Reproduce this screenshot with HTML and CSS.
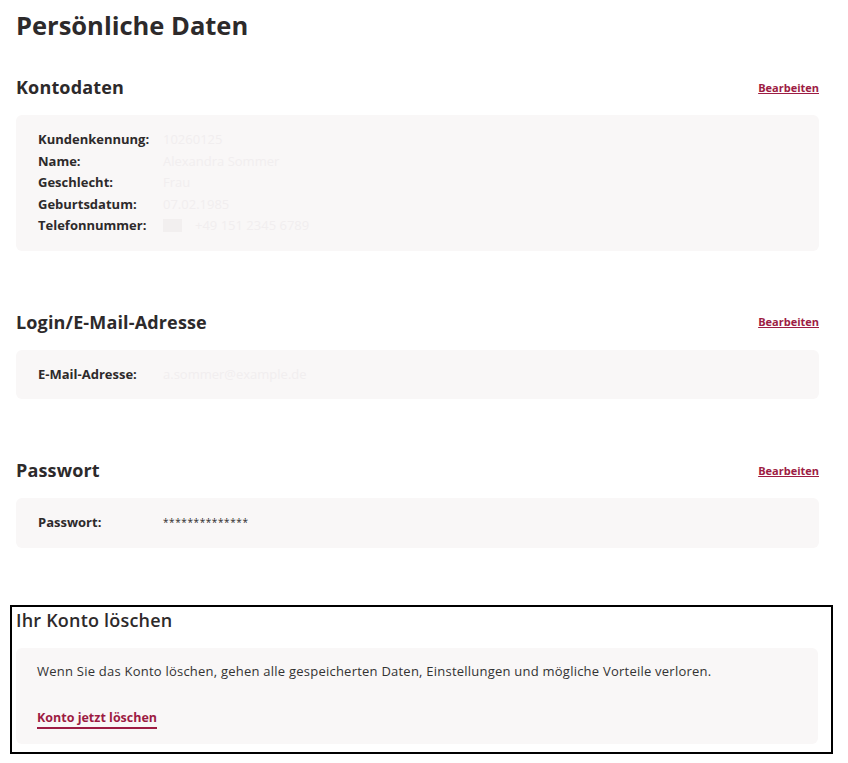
FILE: index.html
```html
<!DOCTYPE html>
<html lang="de">

<head>
    <meta charset="UTF-8">
    <meta name="viewport" content="width=device-width, initial-scale=1.0">
    <title>Persönliche Daten</title>

    <link rel="stylesheet" href="styles.css">
</head>

<body>

    <main class="page">
        <h1 class="page-title">Persönliche Daten</h1>

        <section class="section">
            <div class="section-head">
                <h2 class="section-title">Kontodaten</h2>
                <a href="#" class="edit-link">Bearbeiten</a>
            </div>
            <div class="card">
                <div class="data-row">
                    <span class="data-label">Kundenkennung:</span>
                    <span class="data-value">10260125</span>
                </div>
                <div class="data-row">
                    <span class="data-label">Name:</span>
                    <span class="data-value">Alexandra Sommer</span>
                </div>
                <div class="data-row">
                    <span class="data-label">Geschlecht:</span>
                    <span class="data-value">Frau</span>
                </div>
                <div class="data-row">
                    <span class="data-label">Geburtsdatum:</span>
                    <span class="data-value">07.02.1985</span>
                </div>
                <div class="data-row">
                    <span class="data-label">Telefonnummer:</span>
                    <span class="data-value"><span class="flag"></span>+49 151 2345 6789</span>
                </div>
            </div>
        </section>

        <section class="section">
            <div class="section-head">
                <h2 class="section-title">Login/E-Mail-Adresse</h2>
                <a href="#" class="edit-link">Bearbeiten</a>
            </div>
            <div class="card">
                <div class="data-row">
                    <span class="data-label">E-Mail-Adresse:</span>
                    <span class="data-value">a.sommer@example.de</span>
                </div>
            </div>
        </section>

        <section class="section">
            <div class="section-head">
                <h2 class="section-title">Passwort</h2>
                <a href="#" class="edit-link">Bearbeiten</a>
            </div>
            <div class="card">
                <div class="data-row">
                    <span class="data-label">Passwort:</span>
                    <span class="data-value password">**************</span>
                </div>
            </div>
        </section>

        <section class="delete-box">
            <div class="section-head">
                <h2 class="section-title delete-title">Ihr Konto löschen</h2>
            </div>
            <div class="card delete-card">
                <p class="delete-text">Wenn Sie das Konto löschen, gehen alle gespeicherten Daten, Einstellungen und mögliche Vorteile verloren.</p>
                <a href="#" class="delete-link">Konto jetzt löschen</a>
            </div>
        </section>
    </main>

</body>

</html>
```

FILE: styles.css
```css
body {
    margin: 0;
    font-family: "Open Sans", sans-serif;
    color: #2d2a2b;
    background: #fff;
}

.page {
    width: 803px;
    margin-left: 16px;
    padding-top: 8px;
}

.page-title {
    margin: 0;
    font-size: 25.5px;
    line-height: 34px;
    font-weight: 700;
}

.section {
    margin-top: 33px;
}

.section + .section {
    margin-top: 59px;
}

.section-head {
    display: flex;
    justify-content: space-between;
    align-items: center;
    height: 24px;
    margin-bottom: 16px;
}

.section-title {
    margin: 0;
    font-size: 18px;
    line-height: 24px;
    font-weight: 700;
    letter-spacing: 0.15px;
}

.edit-link {
    font-size: 11px;
    font-weight: 700;
    color: #9d1c43;
    text-decoration: underline;
}

.card {
    background-color: #f9f7f7;
    border-radius: 6px;
    padding: 14px 22px;
}

.data-row {
    display: grid;
    grid-template-columns: 125px 1fr;
    line-height: 21.5px;
    font-size: 13px;
}

.data-label {
    font-weight: 700;
}

.data-value {
    color: #f1eeef;
    display: flex;
    align-items: center;
}

.data-value.password {
    color: #2d2a2b;
    letter-spacing: 0.6px;
    font-size: 10px;
}

.flag {
    display: inline-block;
    width: 19px;
    height: 13px;
    background-color: #f2efef;
    margin-right: 13px;
}

.delete-box {
    margin-top: 57px;
    margin-left: -6px;
    width: 802px;
    border: 2px solid #000;
    padding: 1px 13px 8px 4px;
}

.delete-title {
    font-weight: 600;
    font-size: 18px;
    letter-spacing: 0.2px;
}

.delete-card {
    padding: 13px 21px 15px;
}

.delete-text {
    margin: 0;
    font-size: 13px;
    line-height: 21px;
    letter-spacing: 0.23px;
    color: #333;
}

.delete-link {
    display: inline-block;
    margin-top: 27px;
    font-size: 12.5px;
    font-weight: 700;
    line-height: 18px;
    color: #9d1c43;
    text-decoration: none;
    border-bottom: 2px solid #9d1c43;
}
```
